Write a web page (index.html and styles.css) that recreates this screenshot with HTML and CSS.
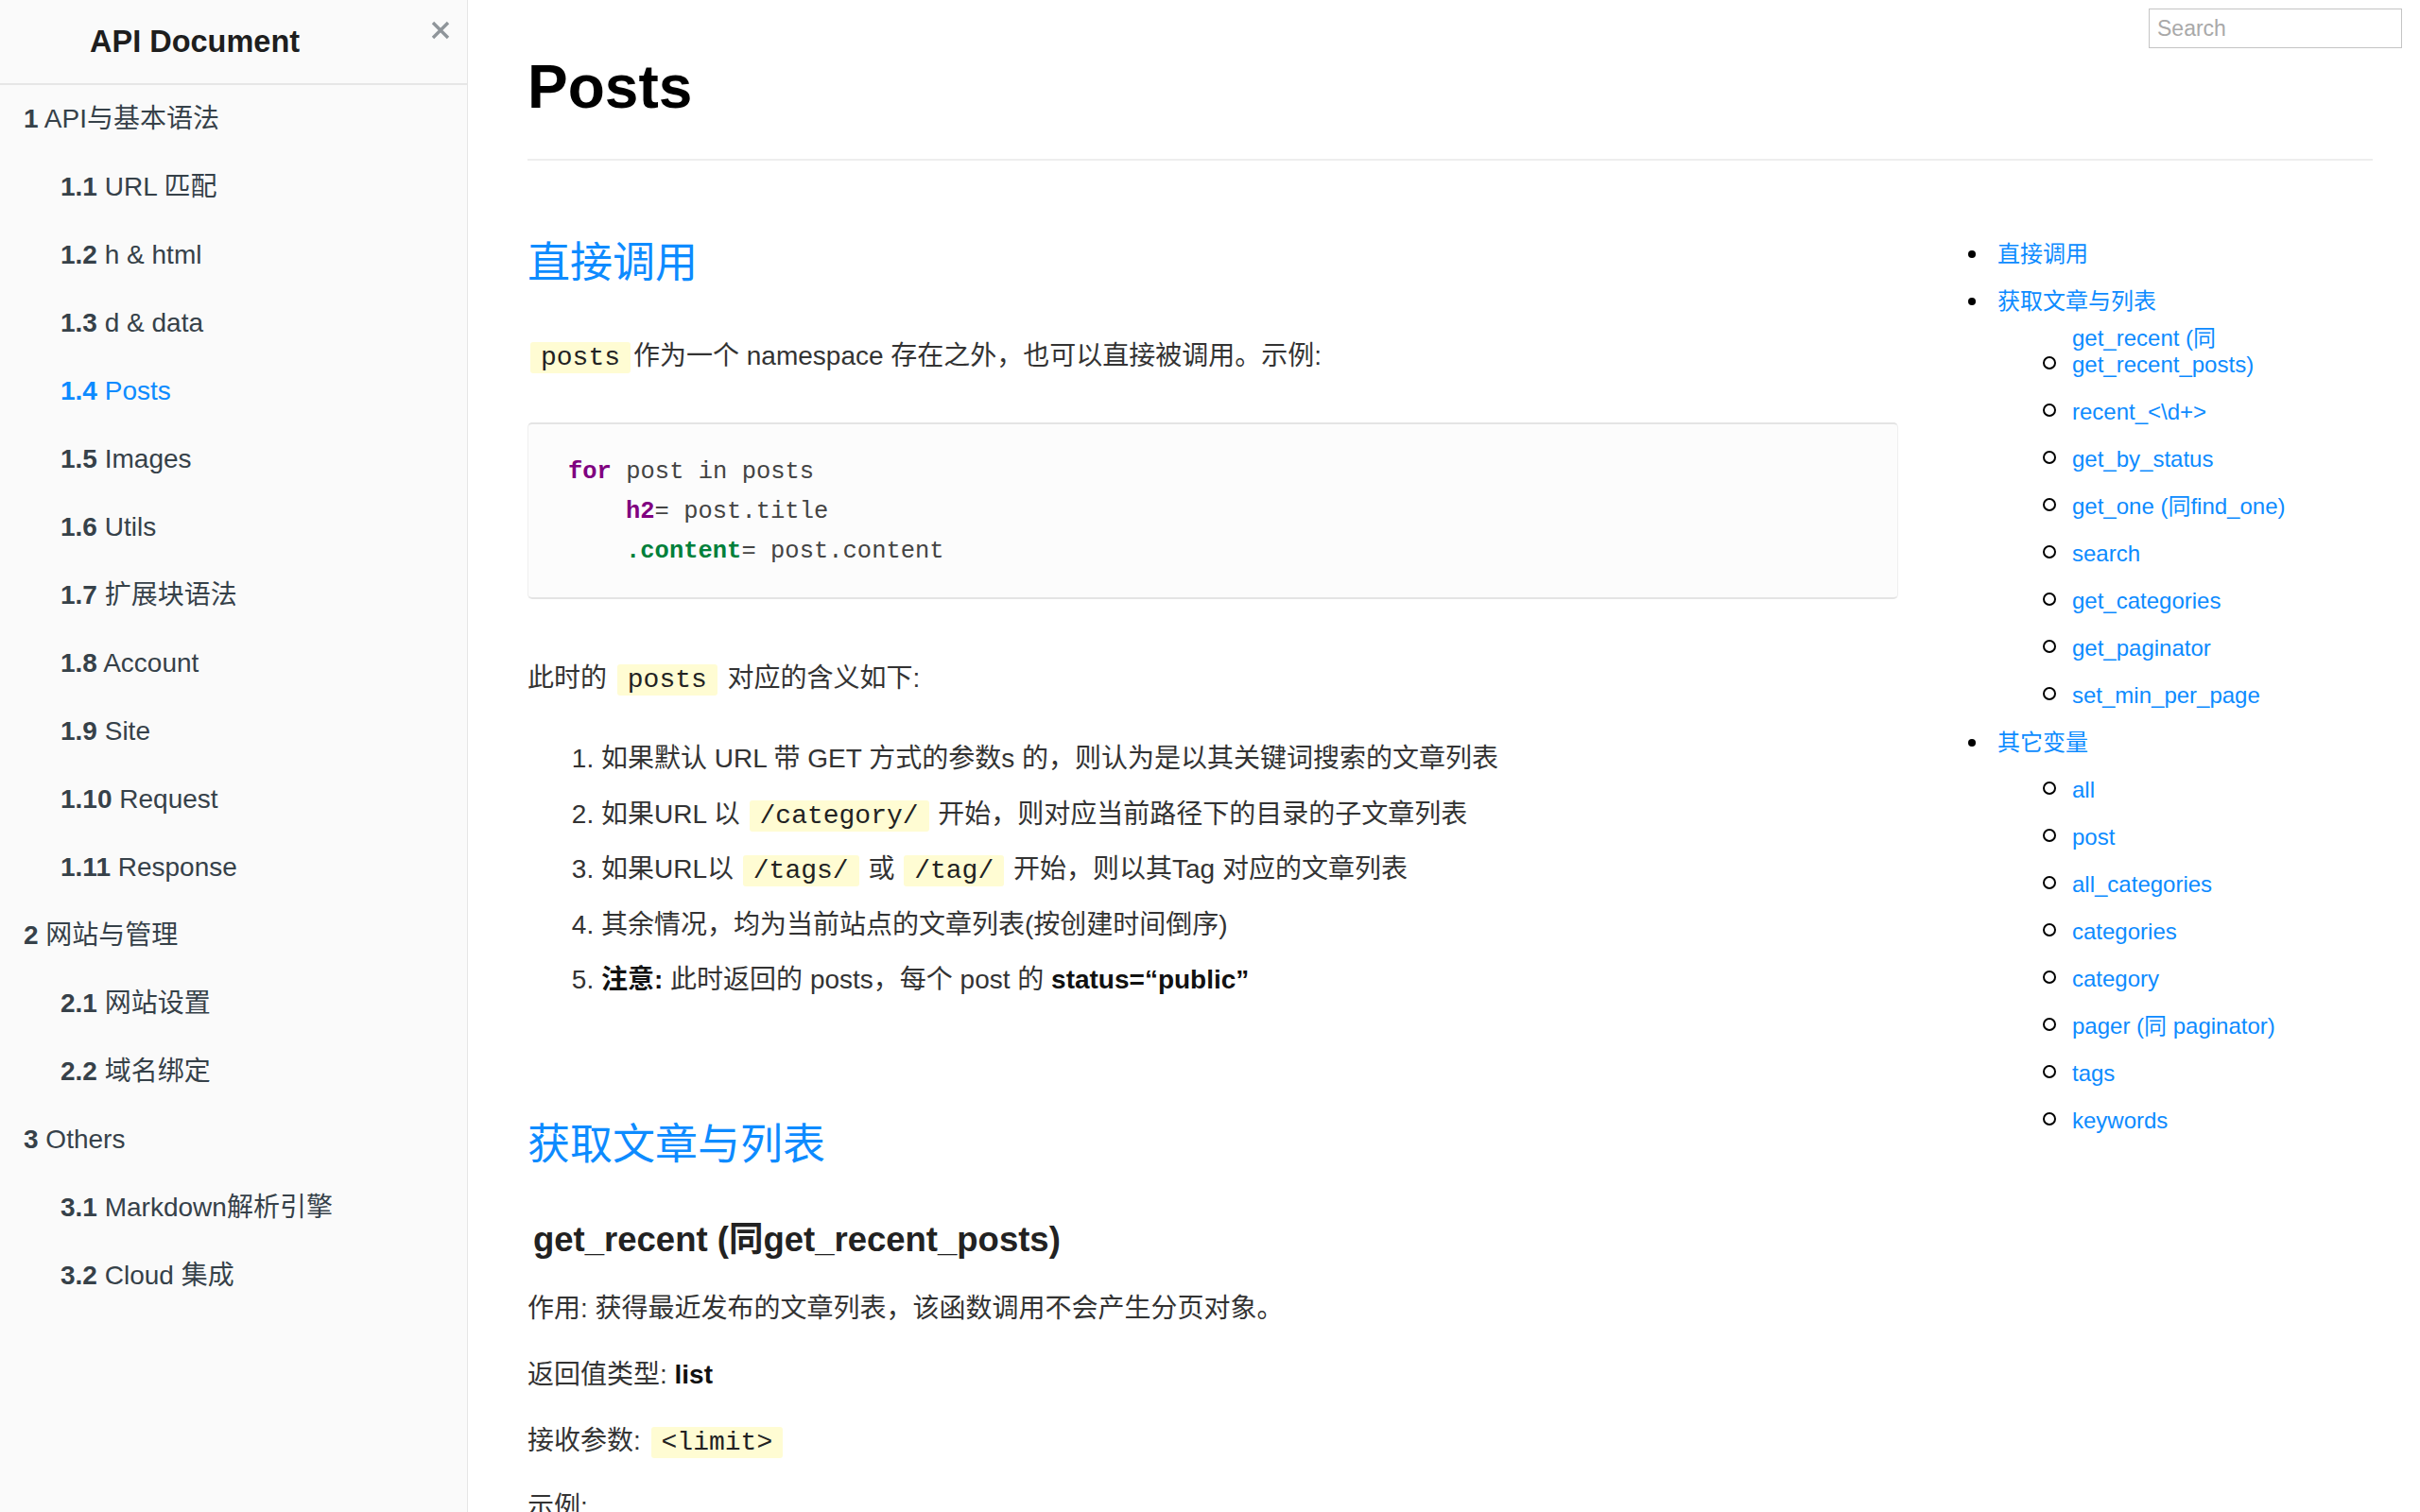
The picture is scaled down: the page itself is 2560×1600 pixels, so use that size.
FILE: index.html
```html
<!DOCTYPE html>
<html lang="zh-CN">
<head>
<meta charset="utf-8">
<title>Posts - API Document</title>
<link rel="stylesheet" href="styles.css">
</head>
<body>
<div class="page">
  <aside class="sidebar">
    <div class="sidebar-header">
      <h1 class="brand">API Document</h1>
      <span class="close" aria-label="close">
        <svg width="20" height="20" viewBox="0 0 20 20"><path d="M2 2 L18 18 M18 2 L2 18" stroke="#8f959a" stroke-width="3.4" fill="none"/></svg>
      </span>
    </div>
    <ul class="side-nav">
      <li class="lv1"><a href="#"><b>1</b> API与基本语法</a></li>
      <li class="lv2"><a href="#"><b>1.1</b> URL 匹配</a></li>
      <li class="lv2"><a href="#"><b>1.2</b> h &amp; html</a></li>
      <li class="lv2"><a href="#"><b>1.3</b> d &amp; data</a></li>
      <li class="lv2 active"><a href="#"><b>1.4</b> Posts</a></li>
      <li class="lv2"><a href="#"><b>1.5</b> Images</a></li>
      <li class="lv2"><a href="#"><b>1.6</b> Utils</a></li>
      <li class="lv2"><a href="#"><b>1.7</b> 扩展块语法</a></li>
      <li class="lv2"><a href="#"><b>1.8</b> Account</a></li>
      <li class="lv2"><a href="#"><b>1.9</b> Site</a></li>
      <li class="lv2"><a href="#"><b>1.10</b> Request</a></li>
      <li class="lv2"><a href="#"><b>1.11</b> Response</a></li>
      <li class="lv1"><a href="#"><b>2</b> 网站与管理</a></li>
      <li class="lv2"><a href="#"><b>2.1</b> 网站设置</a></li>
      <li class="lv2"><a href="#"><b>2.2</b> 域名绑定</a></li>
      <li class="lv1"><a href="#"><b>3</b> Others</a></li>
      <li class="lv2"><a href="#"><b>3.1</b> Markdown解析引擎</a></li>
      <li class="lv2"><a href="#"><b>3.2</b> Cloud 集成</a></li>
    </ul>
  </aside>

  <main class="main">
    <input class="search" type="text" placeholder="Search">
    <header class="page-head">
      <h1>Posts</h1>
    </header>
    <div class="row">
      <article class="content">
        <h2>直接调用</h2>
        <p><code>posts</code>作为一个 namespace 存在之外，也可以直接被调用。示例:</p>
        <div class="code">
          <div class="line"><span class="kw">for</span> <span>post in posts</span></div>
          <div class="line ind"><span class="kw">h2</span><span>= post.title</span></div>
          <div class="line ind"><span class="cls">.content</span><span>= post.content</span></div>
        </div>
        <p>此时的 <code>posts</code> 对应的含义如下:</p>
        <ol class="rules">
          <li>如果默认 URL 带 GET 方式的参数s 的，则认为是以其关键词搜索的文章列表</li>
          <li>如果URL 以 <code>/category/</code> 开始，则对应当前路径下的目录的子文章列表</li>
          <li>如果URL以 <code>/tags/</code> 或 <code>/tag/</code> 开始，则以其Tag 对应的文章列表</li>
          <li>其余情况，均为当前站点的文章列表(按创建时间倒序)</li>
          <li><strong>注意:</strong> 此时返回的 posts，每个 post 的 <strong>status=“public”</strong></li>
        </ol>
        <h2>获取文章与列表</h2>
        <h3>get_recent (同get_recent_posts)</h3>
        <p>作用: 获得最近发布的文章列表，该函数调用不会产生分页对象。</p>
        <p>返回值类型: <strong>list</strong></p>
        <p>接收参数: <code>&lt;limit&gt;</code></p>
        <p>示例:</p>
      </article>
      <nav class="toc">
        <ul>
          <li><a href="#">直接调用</a></li>
          <li><a href="#">获取文章与列表</a>
            <ul>
              <li><a href="#">get_recent (同get_recent_posts)</a></li>
              <li><a href="#">recent_&lt;\d+&gt;</a></li>
              <li><a href="#">get_by_status</a></li>
              <li><a href="#">get_one (同find_one)</a></li>
              <li><a href="#">search</a></li>
              <li><a href="#">get_categories</a></li>
              <li><a href="#">get_paginator</a></li>
              <li><a href="#">set_min_per_page</a></li>
            </ul>
          </li>
          <li><a href="#">其它变量</a>
            <ul>
              <li><a href="#">all</a></li>
              <li><a href="#">post</a></li>
              <li><a href="#">all_categories</a></li>
              <li><a href="#">categories</a></li>
              <li><a href="#">category</a></li>
              <li><a href="#">pager (同 paginator)</a></li>
              <li><a href="#">tags</a></li>
              <li><a href="#">keywords</a></li>
            </ul>
          </li>
        </ul>
      </nav>
    </div>
  </main>
</div>
</body>
</html>
```
FILE: styles.css
```css
* { box-sizing: border-box; }
html, body { margin: 0; padding: 0; }
body {
  font-family: "Liberation Sans", "Noto Sans CJK SC", sans-serif;
  color: #333;
  background: #fff;
}
.page { display: flex; min-height: 100vh; }

/* ---------- sidebar ---------- */
.sidebar {
  width: 495px;
  flex: none;
  background: #fafafa;
  border-right: 1px solid #e6e6e6;
}
.sidebar-header {
  height: 90px;
  border-bottom: 2px solid #e6e6e6;
  display: flex;
  align-items: center;
}
.brand {
  flex: 1;
  margin: 0;
  padding-left: 95px;
  font-size: 32.5px;
  font-weight: bold;
  color: #1e1e1e;
}
.close {
  align-self: flex-start;
  margin: 22px 18px 0 0;
  width: 20px;
  height: 20px;
  display: block;
}
.close svg { display: block; }
.side-nav { list-style: none; margin: 0; padding: 0; }
.side-nav a {
  display: block;
  font-size: 28px;
  line-height: 72px;
  color: #364149;
  text-decoration: none;
  white-space: nowrap;
}
.side-nav b { font-weight: bold; }
.side-nav .lv1 a { padding-left: 25px; }
.side-nav .lv2 a { padding-left: 64px; }
.side-nav .active a { color: #0d8bff; }

/* ---------- main ---------- */
.main {
  flex: 1;
  min-width: 0;
  position: relative;
  padding: 0 50px 0 63px;
}
.search {
  position: absolute;
  top: 9px;
  right: 19px;
  width: 268px;
  height: 42px;
  border: 1px solid #c4c4c4;
  border-radius: 0;
  padding: 0 8px;
  font-family: "Liberation Sans", sans-serif;
  font-size: 23px;
  color: #333;
  background: #fff;
  outline: none;
}
.search::placeholder { color: #a9a9a9; }

.page-head {
  padding: 54px 0 37px;
  border-bottom: 2px solid #eee;
}
.page-head h1 {
  margin: 0;
  font-size: 64px;
  line-height: 77px;
  font-weight: bold;
  color: #000;
}

.row { display: flex; align-items: flex-start; }
.content { width: 1450px; flex: none; }

.content h2 {
  margin: 127px 0 50px;
  font-size: 45px;
  line-height: 54px;
  font-weight: normal;
  color: #0d8bff;
}
.content h2:first-child { margin-top: 82px; }
.content h3 {
  margin: 50px 0 30px;
  padding-left: 6px;
  font-size: 36.5px;
  line-height: 45px;
  font-weight: bold;
  color: #222;
}
.content p {
  margin: 28px 0;
  font-size: 28px;
  line-height: 42px;
}
.content strong { color: #111; }

code {
  font-family: "Liberation Mono", "Noto Sans CJK SC", monospace;
  font-size: 28px;
  line-height: 30px;
  background: #fffcd3;
  color: #222;
  padding: 1px 11px;
  margin: 0 3px;
  border-radius: 3px;
}

.code {
  margin: 49px 0 63px;
  padding: 30px 42px 27px;
  background: #fcfcfc;
  border: 1px solid #efefef;
  border-top: 2px solid #e4e4e4;
  border-bottom: 2px solid #e4e4e4;
  border-radius: 5px;
  font-family: "Liberation Mono", monospace;
  font-size: 25.5px;
  line-height: 42px;
  color: #444;
}
.code .line { height: 42px; white-space: pre; }
.code .ind { padding-left: 61px; }
.code .kw { color: #800080; font-weight: bold; }
.code .cls { color: #00803a; font-weight: bold; }

.rules {
  margin: 43px 0 127px;
  padding-left: 78px;
  font-size: 28px;
  line-height: 42px;
}
.rules li { margin-bottom: 16.5px; }
.rules li:last-child { margin-bottom: 0; }
.rules code { margin: 0 2px; }

/* ---------- right toc ---------- */
.toc {
  flex: 1;
  margin-left: 65px;
  min-width: 0;
}
.toc ul {
  margin: 74px 0 0;
  padding-left: 40px;
  list-style: none;
  font-size: 24px;
  line-height: 50px;
  color: #000;
}
.toc ul ul {
  margin: 0;
  padding-left: 79px;
}
.toc a {
  position: relative;
  display: inline-block;
  line-height: 28px;
  color: #0d8bff;
  text-decoration: none;
}
.toc a::before {
  content: "";
  position: absolute;
  left: -31px;
  bottom: 10px;
  width: 8px;
  height: 8px;
  border-radius: 50%;
  background: #000;
}
.toc ul ul a::before {
  left: -31px;
  bottom: 9px;
  width: 10px;
  height: 10px;
  background: none;
  border: 2.2px solid #000;
}
```
